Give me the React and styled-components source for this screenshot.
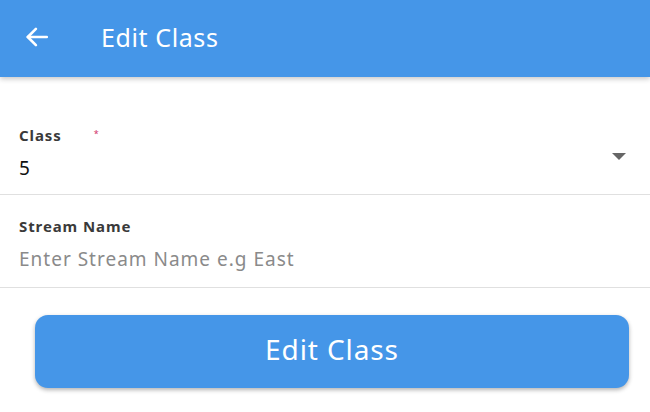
import React from 'react'
import styled, { createGlobalStyle } from 'styled-components'

const Global = createGlobalStyle`
  html, body {
    margin: 0;
    padding: 0;
    background: #fff;
    font-family: "Noto Sans", "Open Sans", sans-serif;
  }
`;

const Page = styled.div`
  width: 650px;
  height: 412px;
  overflow: hidden;
  background: #fff;
`;

const Header = styled.div`
  height: 77px;
  background: #4596e8;
  display: flex;
  align-items: center;
  padding-left: 24px;
  box-shadow: 0 2px 5px rgba(0, 0, 0, 0.22);
  position: relative;
`;

const BackButton = styled.div`
  width: 26px;
  height: 26px;
  display: flex;
  align-items: center;
  justify-content: center;
  margin-top: -3px;
  cursor: pointer;
`;

const Title = styled.div`
  margin-left: 51px;
  margin-top: -4px;
  color: #fff;
  font-size: 25px;
  letter-spacing: 0.6px;
`;

const Form = styled.div`
  padding-top: 47px;
`;

const Field = styled.div`
  position: relative;
  padding: 0 19px;
  border-bottom: 1.5px solid #e0e0e0;
  height: ${p => p.h}px;
  margin-bottom: ${p => p.mb || 0}px;
`;

const Label = styled.div`
  font-size: 15px;
  font-weight: 700;
  color: #3a3a3a;
  letter-spacing: 0.9px;
  height: 22px;
  line-height: 22px;
  display: flex;
`;

const Star = styled.span`
  color: #d0336b;
  font-size: 9px;
  font-weight: 400;
  margin-left: 32px;
  line-height: 20px;
`;

const Value = styled.div`
  font-size: 19px;
  color: ${p => (p.$muted ? '#8a8a8a' : '#111')};
  letter-spacing: ${p => (p.$muted ? '1px' : '0')};
  margin-top: ${p => p.$top}px;
  line-height: 24px;
`;

const Caret = styled.div`
  position: absolute;
  right: 24px;
  top: 29px;
  width: 0;
  height: 0;
  border-left: 7px solid transparent;
  border-right: 7px solid transparent;
  border-top: 7px solid #666;
`;

const ButtonWrap = styled.div`
  padding: 27px 21px 0 35px;
`;

const Button = styled.button`
  width: 100%;
  height: 73px;
  border: none;
  border-radius: 13px;
  background: #4596e8;
  color: #fff;
  font-family: inherit;
  font-size: 28px;
  letter-spacing: 0.9px;
  padding: 0 0 6px;
  box-shadow: 0 2px 4px rgba(0, 0, 0, 0.3);
  cursor: pointer;
`;

const ArrowIcon = () => (
  <svg width="26" height="26" viewBox="0 0 24 24" fill="none" stroke="#fff" strokeWidth="2.4" strokeLinecap="round" strokeLinejoin="round">
    <path d="M21 12H3.5" />
    <path d="M11 4.5L3.5 12L11 19.5" />
  </svg>
)

const App = () => {
  return (
    <Page>
      <Global />
      <Header>
        <BackButton><ArrowIcon /></BackButton>
        <Title>Edit Class</Title>
      </Header>
      <Form>
        <Field h={70} mb={20}>
          <Label>Class<Star>*</Star></Label>
          <Value $top={10}>5</Value>
          <Caret />
        </Field>
        <Field h={72}>
          <Label>Stream Name</Label>
          <Value $muted $top={10}>Enter Stream Name e.g East</Value>
        </Field>
      </Form>
      <ButtonWrap>
        <Button>Edit Class</Button>
      </ButtonWrap>
    </Page>
  )
}

export default App
